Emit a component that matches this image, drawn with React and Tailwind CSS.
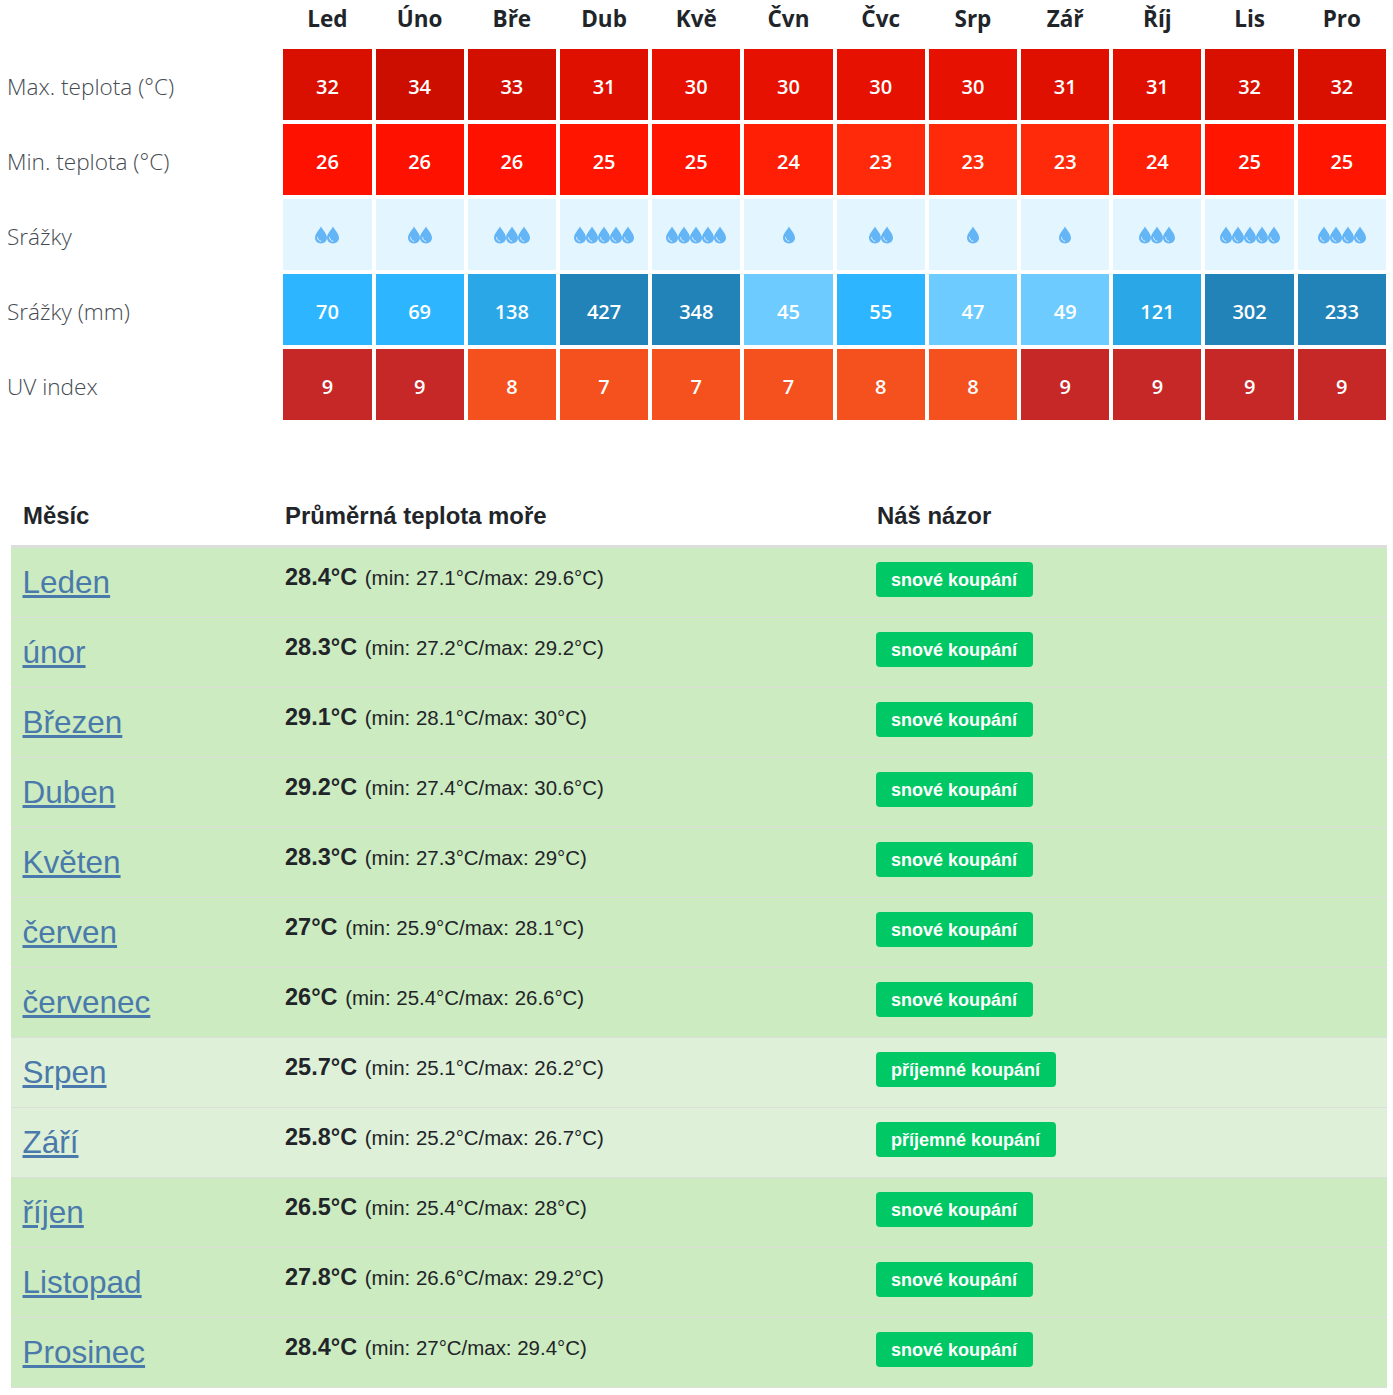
const months = ["Led", "Úno", "Bře", "Dub", "Kvě", "Čvn", "Čvc", "Srp", "Zář", "Říj", "Lis", "Pro"];

const maxBg = { 34: "bg-[#cc0e00]", 33: "bg-[#d30f00]", 32: "bg-[#d90f00]", 31: "bg-[#e01000]", 30: "bg-[#e61100]" };
const minBg = { 26: "bg-[#ff1100]", 25: "bg-[#ff1500]", 24: "bg-[#ff1f05]", 23: "bg-[#ff2a0a]" };
const uvBg = { 9: "bg-[#c62828]", 8: "bg-[#f4511e]", 7: "bg-[#f4511e]" };

const maxTemps = [32, 34, 33, 31, 30, 30, 30, 30, 31, 31, 32, 32];
const minTemps = [26, 26, 26, 25, 25, 24, 23, 23, 23, 24, 25, 25];
const drops = [2, 2, 3, 5, 5, 1, 2, 1, 1, 3, 5, 4];
const uv = [9, 9, 8, 7, 7, 7, 8, 8, 9, 9, 9, 9];
const rain = [
  [70, "bg-[#2db6ff]"],
  [69, "bg-[#2db6ff]"],
  [138, "bg-[#29a7e6]"],
  [427, "bg-[#2283b8]"],
  [348, "bg-[#2283b8]"],
  [45, "bg-[#6ecbff]"],
  [55, "bg-[#2db6ff]"],
  [47, "bg-[#6ecbff]"],
  [49, "bg-[#6ecbff]"],
  [121, "bg-[#29a7e6]"],
  [302, "bg-[#2283b8]"],
  [233, "bg-[#2283b8]"],
];

const sea = [
  ["Leden", "28.4", "27.1", "29.6", true],
  ["únor", "28.3", "27.2", "29.2", true],
  ["Březen", "29.1", "28.1", "30", true],
  ["Duben", "29.2", "27.4", "30.6", true],
  ["Květen", "28.3", "27.3", "29", true],
  ["červen", "27", "25.9", "28.1", true],
  ["červenec", "26", "25.4", "26.6", true],
  ["Srpen", "25.7", "25.1", "26.2", false],
  ["Září", "25.8", "25.2", "26.7", false],
  ["říjen", "26.5", "25.4", "28", true],
  ["Listopad", "27.8", "26.6", "29.2", true],
  ["Prosinec", "28.4", "27", "29.4", true],
];

function Drop() {
  return (
    <svg width="12" height="18" viewBox="0 0 12 18" className="block">
      <path d="M6 0.5 C7 3 12 7.5 12 11.8 C12 15.2 9.3 17.5 6 17.5 C2.7 17.5 0 15.2 0 11.8 C0 7.5 5 3 6 0.5 Z" fill="#64b5f6" />
      <path d="M2.6 11.5 C2.6 13.6 3.9 15 5.8 15.2" fill="none" stroke="#e3f2fd" strokeWidth="1" strokeLinecap="round" />
    </svg>
  );
}

function Cell({ bg, children }) {
  return (
    <div className={`h-[71px] flex items-center justify-center pt-[5px] text-white font-semibold text-[20px] ${bg}`}>
      {children}
    </div>
  );
}

function Label({ children }) {
  return <div className="h-[71px] flex items-center pl-[7px] pt-[5px] text-[22.6px] font-light text-[#444b52]">{children}</div>;
}

export default function App() {
  return (
    <div className="w-[1393px] h-[1395px] bg-white overflow-hidden">
      {/* klimaticka tabulka */}
      <div className="grid grid-cols-[279.3px_repeat(12,88.22px)] gap-[4px] font-['Open_Sans',sans-serif]">
        <div className="h-[45px]" />
        {months.map((m) => (
          <div key={m} className="h-[45px] pb-[8px] flex items-center justify-center text-[22.5px] font-bold text-[#212529]">
            {m}
          </div>
        ))}
        <Label>Max. teplota (°C)</Label>
        {maxTemps.map((t, i) => (
          <Cell key={i} bg={maxBg[t]}>{t}</Cell>
        ))}
        <Label>Min. teplota (°C)</Label>
        {minTemps.map((t, i) => (
          <Cell key={i} bg={minBg[t]}>{t}</Cell>
        ))}
        <Label>Srážky</Label>
        {drops.map((n, i) => (
          <div key={i} className="h-[71px] flex items-center justify-center bg-[#e3f5ff]">
            {Array.from({ length: n }).map((_, j) => (
              <Drop key={j} />
            ))}
          </div>
        ))}
        <Label>Srážky (mm)</Label>
        {rain.map(([v, bg], i) => (
          <Cell key={i} bg={bg}>{v}</Cell>
        ))}
        <Label>UV index</Label>
        {uv.map((t, i) => (
          <Cell key={i} bg={uvBg[t]}>{t}</Cell>
        ))}
      </div>

      {/* teplota more */}
      <div className="mt-[68px] ml-[11px] w-[1376px] font-['Liberation_Sans',sans-serif] text-[#212529]">
        <div className="grid grid-cols-[262px_592px_1fr] h-[60px] pb-[2px] items-center border-b-[3px] border-[#dcdedc] text-[23.9px] font-bold">
          <div className="pl-[12px]">Měsíc</div>
          <div className="pl-[12px]">Průměrná teplota moře</div>
          <div className="pl-[12px]">Náš názor</div>
        </div>
        {sea.map(([name, avg, min, max, best]) => (
          <div
            key={name}
            className={`grid grid-cols-[262px_592px_1fr] h-[70px] border-b border-[#dcdedc] ${best ? "bg-[#cdebc0]" : "bg-[#dff0d8]"}`}
          >
            <div className="pl-[11.5px] pt-[14px]">
              <a href="#" className="text-[31.5px] leading-[40px] text-[#4a7aab] underline">{name}</a>
            </div>
            <div className="pl-[12px] pt-[13px] text-[20.45px] leading-[32px]">
              <b className="text-[23.5px] mr-[2px]">{avg}°C</b> (min: {min}°C/max: {max}°C)
            </div>
            <div className="pl-[11px] pt-[14px]">
              <span className="inline-block h-[35px] pl-[15px] pr-[16px] rounded-[4px] bg-[#00c864] text-white font-bold text-[18px] leading-[36px]">
                {best ? "snové koupání" : "příjemné koupání"}
              </span>
            </div>
          </div>
        ))}
      </div>
    </div>
  );
}
